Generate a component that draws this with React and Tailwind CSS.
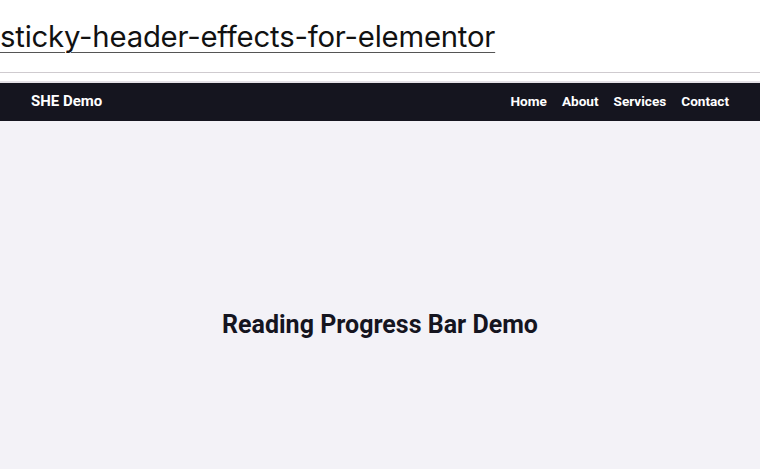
export default function App() {
  return (
    <div className="w-[760px] h-[469px] overflow-hidden bg-[#f3f2f7] flex flex-col">
      <div className="bg-white h-[72px] flex flex-col">
        <a
          href="#"
          className="mt-[19px] self-start text-[29.3px] leading-[36px] text-[#111] underline decoration-1 underline-offset-[5px] decoration-[#555] tracking-[-0.2px]"
          style={{ fontFamily: "Inter, sans-serif" }}
        >
          sticky-header-effects-for-elementor
        </a>
      </div>
      <div className="h-px bg-[#cfcbcf]" />
      <div className="h-[8px] bg-white" />
      <div className="h-[2px] bg-[#e4e1e6]" />
      <header
        className="h-[38px] bg-[#15151f] flex items-center justify-between pl-[31px] pr-[31px] pb-[2px] text-white font-bold"
        style={{ fontFamily: "Roboto, sans-serif" }}
      >
        <span className="text-[15px]">SHE Demo</span>
        <nav className="flex gap-[15px] text-[13.6px]">
          <span>Home</span>
          <span>About</span>
          <span>Services</span>
          <span>Contact</span>
        </nav>
      </header>
      <div className="flex-1 flex items-center justify-center pt-[60px]">
        <h1
          className="text-[25px] font-bold text-[#15151f]"
          style={{ fontFamily: "Roboto, sans-serif" }}
        >
          Reading Progress Bar Demo
        </h1>
      </div>
    </div>
  );
}
